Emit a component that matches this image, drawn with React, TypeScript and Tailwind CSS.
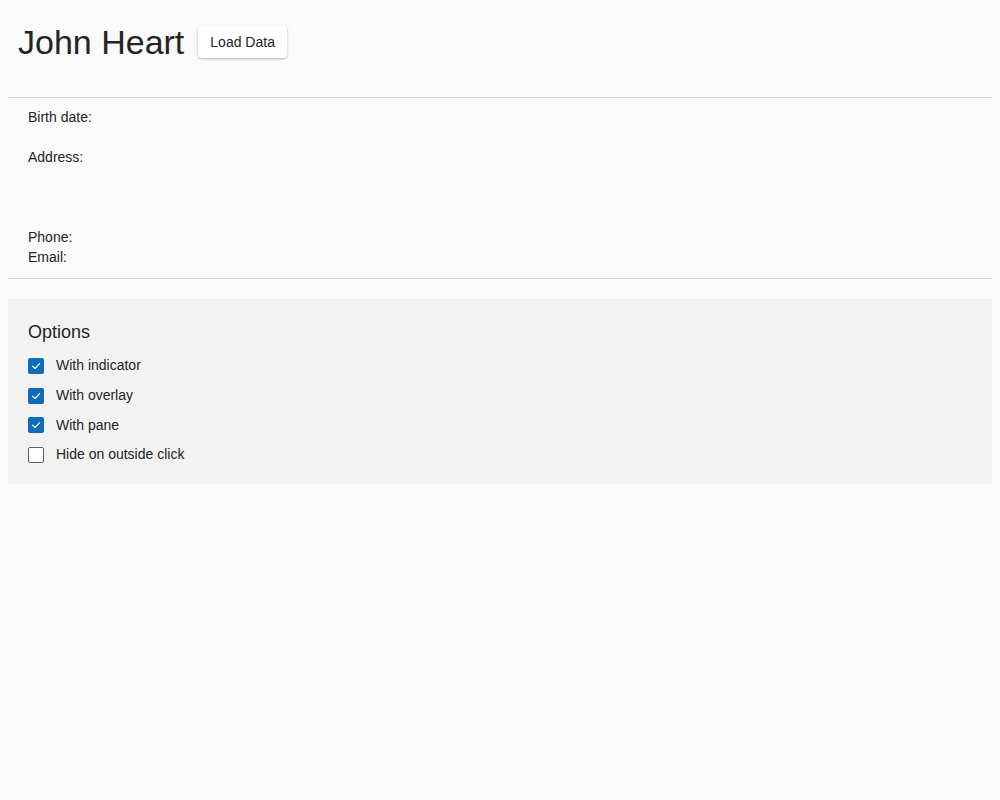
import React from "react";

const Check = ({ checked, label }: { checked: boolean; label: string }) => (
  <div className="flex items-center h-[29.7px]">
    {checked ? (
      <div className="w-4 h-4 rounded-[2px] bg-[#0f6cbd] flex items-center justify-center">
        <svg width="10" height="10" viewBox="0 0 10 10" fill="none">
          <path d="M1.5 5.2 L4 7.5 L8.7 2.6" stroke="white" strokeWidth="1.1" strokeLinecap="round" strokeLinejoin="round" />
        </svg>
      </div>
    ) : (
      <div className="w-4 h-4 rounded-[2px] border border-[#616161] bg-white" />
    )}
    <span className="ml-3 text-[14px] text-[#242424]">{label}</span>
  </div>
);

export default function App() {
  return (
    <div className="min-h-[800px] bg-[#fafafa] px-2 text-[#242424]" style={{ fontFamily: "'Liberation Sans', Arial, sans-serif" }}>
      <div className="flex items-center h-[84px] pl-[10px]">
        <h1 className="text-[34px] leading-none text-[#242424]">John Heart</h1>
        <button className="ml-[14px] h-8 px-3 bg-white rounded-[4px] shadow-[0_1px_3px_rgba(0,0,0,0.2),0_1px_2px_rgba(0,0,0,0.1)] text-[14px] text-[#242424]">
          Load Data
        </button>
      </div>
      <div className="mt-[13px] border-t border-[#d1d1d1] pt-[9px] pb-[11px] pl-5 text-[14px] leading-5">
        <div>Birth date:</div>
        <div className="mt-5">Address:</div>
        <div className="mt-[60px]">Phone:</div>
        <div>Email:</div>
      </div>
      <div className="border-t border-[#d1d1d1]" />
      <div className="mt-5 bg-[#f2f2f2] pl-5 pt-[21px] pb-[14px]">
        <div className="text-[18px] leading-6">Options</div>
        <div className="mt-[7px]">
          <Check checked label="With indicator" />
          <Check checked label="With overlay" />
          <Check checked label="With pane" />
          <Check checked={false} label="Hide on outside click" />
        </div>
      </div>
    </div>
  );
}
